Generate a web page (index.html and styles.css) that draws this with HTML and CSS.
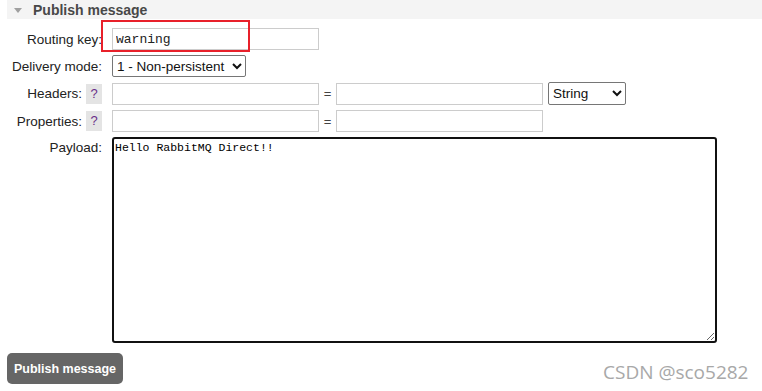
FILE: index.html
```html
<!DOCTYPE html>
<html lang="en">
<head>
    <meta charset="UTF-8">
    <title>Publish message</title>
    <link rel="stylesheet" href="styles.css">
</head>
<body>
    <div class="section">
        <h2 class="section-title"><span class="arrow"></span>Publish message</h2>
        <form class="publish-form">
            <div class="form-row">
                <label class="form-label" for="routing_key">Routing key:</label>
                <div class="highlight">
                    <input type="text" id="routing_key" class="mono-input" value="warning">
                </div>
            </div>
            <div class="form-row">
                <label class="form-label" for="delivery_mode">Delivery mode:</label>
                <select id="delivery_mode" class="mode-select">
                    <option>1 - Non-persistent</option>
                    <option>2 - Persistent</option>
                </select>
            </div>
            <div class="form-row">
                <label class="form-label">Headers: <span class="help">?</span></label>
                <input type="text" class="pair-input">
                <span class="equals">=</span>
                <input type="text" class="pair-input">
                <select class="type-select">
                    <option>String</option>
                    <option>Number</option>
                    <option>Boolean</option>
                    <option>List</option>
                </select>
            </div>
            <div class="form-row">
                <label class="form-label">Properties: <span class="help">?</span></label>
                <input type="text" class="pair-input">
                <span class="equals">=</span>
                <input type="text" class="pair-input">
            </div>
            <div class="form-row payload-row">
                <label class="form-label" for="payload">Payload:</label>
                <textarea id="payload" class="payload">Hello RabbitMQ Direct!!</textarea>
            </div>
            <button type="button" class="publish-btn">Publish message</button>
        </form>
    </div>
    <div class="watermark">CSDN @sco5282</div>
</body>
</html>
```

FILE: styles.css
```css
body {
    font-family: 'Liberation Sans', Arial, sans-serif;
    font-size: 13px;
    color: #333;
    margin: 0;
    padding: 0 0 0 7px;
    background: #fff;
}
.section-title {
    display: flex;
    align-items: center;
    height: 19px;
    margin: 0;
    padding-left: 7px;
    background: #f4f4f4;
    font-size: 14px;
    font-weight: bold;
    color: #484848;
}
.arrow {
    width: 0;
    height: 0;
    border-left: 4px solid transparent;
    border-right: 4px solid transparent;
    border-top: 5px solid #a0a0a0;
    margin-right: 11px;
    margin-top: 2px;
}
.publish-form {
    padding-top: 9px;
}
.form-row {
    display: flex;
    align-items: center;
    margin-bottom: 5px;
}
.form-label {
    display: flex;
    align-items: center;
    justify-content: flex-end;
    gap: 4px;
    width: 95px;
    padding-right: 2px;
    margin-right: 8px;
    font-size: 13.5px;
    color: #222;
    white-space: nowrap;
}
.help {
    display: block;
    width: 16px;
    height: 20px;
    line-height: 20px;
    text-align: center;
    font-size: 13px;
    background: #e4e4e4;
    color: #6a2f8a;
}
.highlight {
    position: relative;
    display: flex;
}
.highlight::before {
    content: '';
    position: absolute;
    left: -11px;
    top: -8px;
    width: 145px;
    height: 28px;
    border: 2px solid #e8202a;
    pointer-events: none;
}
input[type="text"] {
    box-sizing: border-box;
    width: 207px;
    height: 22px;
    border: 1px solid #ccc;
    padding: 1px 3px;
    margin: 0;
    font-size: 13px;
}
.mono-input {
    font-family: 'Liberation Mono', 'Courier New', monospace;
    color: #222;
}
.mode-select {
    box-sizing: border-box;
    width: 134px;
    height: 22px;
    font-family: 'Liberation Sans', Arial, sans-serif;
    font-size: 13.5px;
    color: #111;
    border: 1px solid #767676;
    border-radius: 2px;
    background: #fff;
    margin: 0;
}
.equals {
    width: 17px;
    text-align: center;
    color: #444;
}
.type-select {
    box-sizing: border-box;
    width: 78px;
    height: 23px;
    margin-left: 5px;
    font-family: 'Liberation Sans', Arial, sans-serif;
    font-size: 13.5px;
    color: #111;
    border: 1px solid #767676;
    border-radius: 2px;
    background: #fff;
}
.payload-row {
    align-items: flex-start;
    margin-bottom: 10px;
}
.payload-row .form-label {
    padding-top: 3px;
}
.payload {
    box-sizing: border-box;
    width: 605px;
    height: 206px;
    margin: 0;
    padding: 2px 1px;
    border: 2px solid #111;
    border-radius: 3px;
    font-family: 'Liberation Mono', 'Courier New', monospace;
    font-size: 11.5px;
    color: #000;
    resize: both;
}
.publish-btn {
    box-sizing: border-box;
    width: 116px;
    height: 31px;
    padding: 0;
    border: none;
    border-radius: 5px;
    background: #666;
    color: #fff;
    font-family: 'Liberation Sans', Arial, sans-serif;
    font-size: 12.5px;
    font-weight: bold;
    cursor: pointer;
}
.watermark {
    position: absolute;
    left: 603px;
    top: 359px;
    font-family: 'Open Sans', 'Noto Sans', sans-serif;
    font-size: 19px;
    color: #a8a8a8;
}
```
